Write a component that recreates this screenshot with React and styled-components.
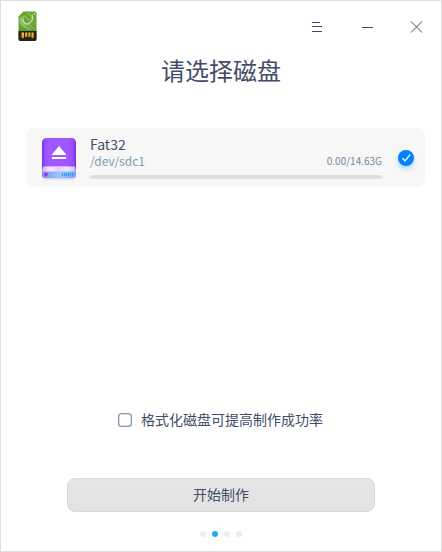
import React from "react";
import styled, { createGlobalStyle } from "styled-components";

const GlobalStyle = createGlobalStyle`
  * { box-sizing: border-box; }
  body { margin: 0; background: #fff; }
  button { font: inherit; color: inherit; padding: 0; }
  svg { display: block; flex: none; }
`;

const Window = styled.main`
  display: flex;
  flex-direction: column;
  width: 442px;
  height: 552px;
  border: 1px solid #dfdfdf;
  background: #fff;
  color: #414d68;
  font-family: "Noto Sans CJK SC", "Noto Sans", sans-serif;
  overflow: hidden;
`;

const TitleBar = styled.header`
  display: flex;
  align-items: center;
  justify-content: space-between;
  height: 50px;
  padding: 0 0 0 16px;
`;

const WindowControls = styled.div`
  display: flex;
`;

const ControlButton = styled.button`
  display: grid;
  place-items: center;
  width: 50px;
  height: 50px;
  border: 0;
  background: transparent;
`;

const Title = styled.h1`
  margin: 0;
  padding-top: 1px;
  height: 77px;
  font-size: 24px;
  font-weight: 400;
  line-height: 36px;
  text-align: center;
`;

const DeviceList = styled.section`
  height: 284px;
  padding: 0 15px 0 25px;
`;

const DeviceCard = styled.article`
  display: flex;
  height: 59px;
  width: 399px;
  padding-left: 14px;
  border-radius: 8px;
  background: #f7f7f7;
`;

const DriveSlot = styled.div`
  width: 38px;
  padding-top: 9px;
`;

const DeviceInfo = styled.div`
  width: 292px;
  margin-left: 12px;
  padding-top: 7px;
`;

const DeviceName = styled.div`
  height: 18px;
  font-size: 14px;
  line-height: 18px;
`;

const DeviceMeta = styled.div`
  display: flex;
  justify-content: space-between;
  height: 22px;
  color: #7d9db4;
  font-size: 12px;
  line-height: 15px;
`;

const Capacity = styled.span`
  color: #7088a0;
  font-size: 10px;
  line-height: 16px;
`;

const UsageTrack = styled.div`
  height: 4px;
  border-radius: 2px;
  background: #dfdfdf;
`;

const SelectedMark = styled.span`
  display: grid;
  place-items: center;
  width: 16px;
  height: 16px;
  margin: 22px 0 0 16px;
  border-radius: 50%;
  background: #0081ff;
  box-shadow: 0 3px 5px rgba(0, 145, 255, 0.3);
`;

const FormatOption = styled.label`
  display: flex;
  align-items: center;
  height: 20px;
  margin-top: -2px;
  padding-left: 117px;
  gap: 9px;
  font-size: 14px;
  line-height: 20px;
`;

const FormatText = styled.span`
  padding-bottom: 2px;
`;

const CheckBox = styled.input`
  appearance: none;
  width: 14px;
  height: 14px;
  margin: 0;
  border: 0;
  border-radius: 3.5px;
  background: #fff;
  box-shadow: inset 0 0 0 1.3px #8d92a8;
`;

const StartButton = styled.button`
  width: 308px;
  height: 34px;
  margin: 48px 0 0 66px;
  border: 1px solid #d8d8d8;
  border-radius: 8px;
  background: linear-gradient(#e6e6e6, #e2e2e2);
`;

const StartText = styled.span`
  display: block;
  padding-bottom: 2px;
  font-size: 14px;
  line-height: 30px;
`;

const Pagination = styled.nav`
  display: flex;
  justify-content: center;
  gap: 6px;
  margin-top: 19px;
`;

const Dot = styled.span`
  width: 6px;
  height: 6px;
  border-radius: 50%;
  background: ${({ $active }) => ($active ? "#2ca7f8" : "#e8edf2")};
`;

const CardIcon = () => (
  <svg width="21" height="32" viewBox="0 0 21 32">
    <defs>
      <linearGradient id="green" x1="0" y1="0" x2="0" y2="1">
        <stop offset="0" stopColor="#6ba525" />
        <stop offset="0.5" stopColor="#68a435" />
        <stop offset="1" stopColor="#3a8020" />
      </linearGradient>
      <linearGradient id="gold" x1="0" y1="0" x2="0" y2="1">
        <stop offset="0" stopColor="#ffc629" />
        <stop offset="1" stopColor="#d99a10" />
      </linearGradient>
    </defs>
    <path d="M6.5 1.5H17.5Q19.5 1.5 19.5 3.5V29Q19.5 31 17.5 31H3.5Q1.5 31 1.5 29V6.5Z" fill="url(#green)" />
    <path d="M1.5 21H19.5V29Q19.5 31 17.5 31H3.5Q1.5 31 1.5 29Z" fill="#22241c" />
    <path d="M2 9C4 6 7 5 10 6C5 8 5 12 8 15C10 17 13 17 15 20C8 20 3 16 2 9Z" fill="#a6ca7c" opacity=".65" />
    <path d="M6 9C6 13 9 15 12 13.5C15 12 17 8 15 5" stroke="#cfe2b5" strokeWidth="1.4" fill="none" opacity=".9" />
    <path d="M10 7C9 10 12 11 13.5 9C14.8 7 14 4.5 11 3.5" stroke="#a8cb78" strokeWidth="1" fill="none" />
    <path d="M10 14.5C13 15.5 16 17 18.5 20" stroke="#a3ca7e" strokeWidth="1" fill="none" opacity=".7" />
    <circle cx="17.3" cy="3.8" r=".8" fill="#d8eabf" />
    <path d="M4.5 22.5H7V28H5.7Q4.5 28 4.5 26.8ZM8.2 22.5H10.2V27H8.2ZM11.4 22.5H13.4V27H11.4ZM14.5 22.5H16.6V28H14.5Z" fill="url(#gold)" />
  </svg>
);

const DriveIcon = () => (
  <svg width="38" height="46" viewBox="0 0 38 46">
    <defs>
      <linearGradient id="driveBody">
        <stop offset="0" stopColor="#792fe7" />
        <stop offset=".09" stopColor="#9650ff" />
        <stop offset=".2" stopColor="#a259ff" />
        <stop offset=".8" stopColor="#a155ff" />
        <stop offset=".92" stopColor="#9147fb" />
        <stop offset="1" stopColor="#782be5" />
      </linearGradient>
      <linearGradient id="driveShelf">
        <stop offset="0" stopColor="#d5b9fb" />
        <stop offset=".25" stopColor="#f2e7ff" />
        <stop offset=".5" stopColor="#e3cdff" />
        <stop offset=".75" stopColor="#f1e4ff" />
        <stop offset="1" stopColor="#d3b7f8" />
      </linearGradient>
      <linearGradient id="driveFront">
        <stop offset="0" stopColor="#7a91e6" />
        <stop offset=".5" stopColor="#9ac8ff" />
        <stop offset="1" stopColor="#8a9cf4" />
      </linearGradient>
      <filter id="driveShadow" x="-20%" y="-20%" width="140%" height="150%">
        <feGaussianBlur stdDeviation="1" />
      </filter>
    </defs>
    <rect x="3" y="35" width="32" height="7" rx="3" fill="#8393b7" opacity=".45" filter="url(#driveShadow)" />
    <path d="M7 1H31Q36 1 36 6V37Q36 41 32 41H6Q2 41 2 37V6Q2 1 7 1Z" fill="url(#driveBody)" />
    <path d="M3 29.5Q19 29 35 29.5L36 35H2Z" fill="url(#driveShelf)" />
    <path d="M2 34.5H36V37Q36 41 32 41H6Q2 41 2 37Z" fill="url(#driveFront)" />
    <path d="M19 9L26.5 18H11.5ZM12 20H26V22H12Z" fill="#fff" />
    <circle cx="6" cy="37.5" r="1.7" fill="#a02bea" />
    <path d="M22.5 36V39M24.5 36V39M26.5 36V39M28.5 36V39M30.5 36V39M32.5 36V39" stroke="#16a6ec" strokeWidth="1.1" />
  </svg>
);

export default function App() {
  return (
    <>
      <GlobalStyle />
      <Window>
        <TitleBar>
          <CardIcon />
          <WindowControls>
            <ControlButton aria-label="菜单">
              <svg width="12" height="12" shapeRendering="crispEdges">
                <path d="M2 2.5H10M2 6.5H12M2 11.5H12" stroke="#414d68" />
              </svg>
            </ControlButton>
            <ControlButton aria-label="最小化">
              <svg width="14" height="12" shapeRendering="crispEdges">
                <path d="M3 7.5H14" stroke="#414d68" />
              </svg>
            </ControlButton>
            <ControlButton aria-label="关闭">
              <svg width="14" height="14">
                <path d="M2 2.5L13 13.5M13 2.5L2 13.5" stroke="#414d68" />
              </svg>
            </ControlButton>
          </WindowControls>
        </TitleBar>
        <Title>请选择磁盘</Title>
        <DeviceList>
          <DeviceCard>
            <DriveSlot><DriveIcon /></DriveSlot>
            <DeviceInfo>
              <DeviceName>Fat32</DeviceName>
              <DeviceMeta>
                <span>/dev/sdc1</span>
                <Capacity>0.00/14.63G</Capacity>
              </DeviceMeta>
              <UsageTrack />
            </DeviceInfo>
            <SelectedMark>
              <svg width="16" height="16">
                <path d="M4.5 8.3L7 11L12.3 4.3" stroke="#fff" strokeWidth="1.3" fill="none" />
              </svg>
            </SelectedMark>
          </DeviceCard>
        </DeviceList>
        <FormatOption>
          <CheckBox type="checkbox" />
          <FormatText>格式化磁盘可提高制作成功率</FormatText>
        </FormatOption>
        <StartButton><StartText>开始制作</StartText></StartButton>
        <Pagination>
          <Dot />
          <Dot $active />
          <Dot />
          <Dot />
        </Pagination>
      </Window>
    </>
  );
}
